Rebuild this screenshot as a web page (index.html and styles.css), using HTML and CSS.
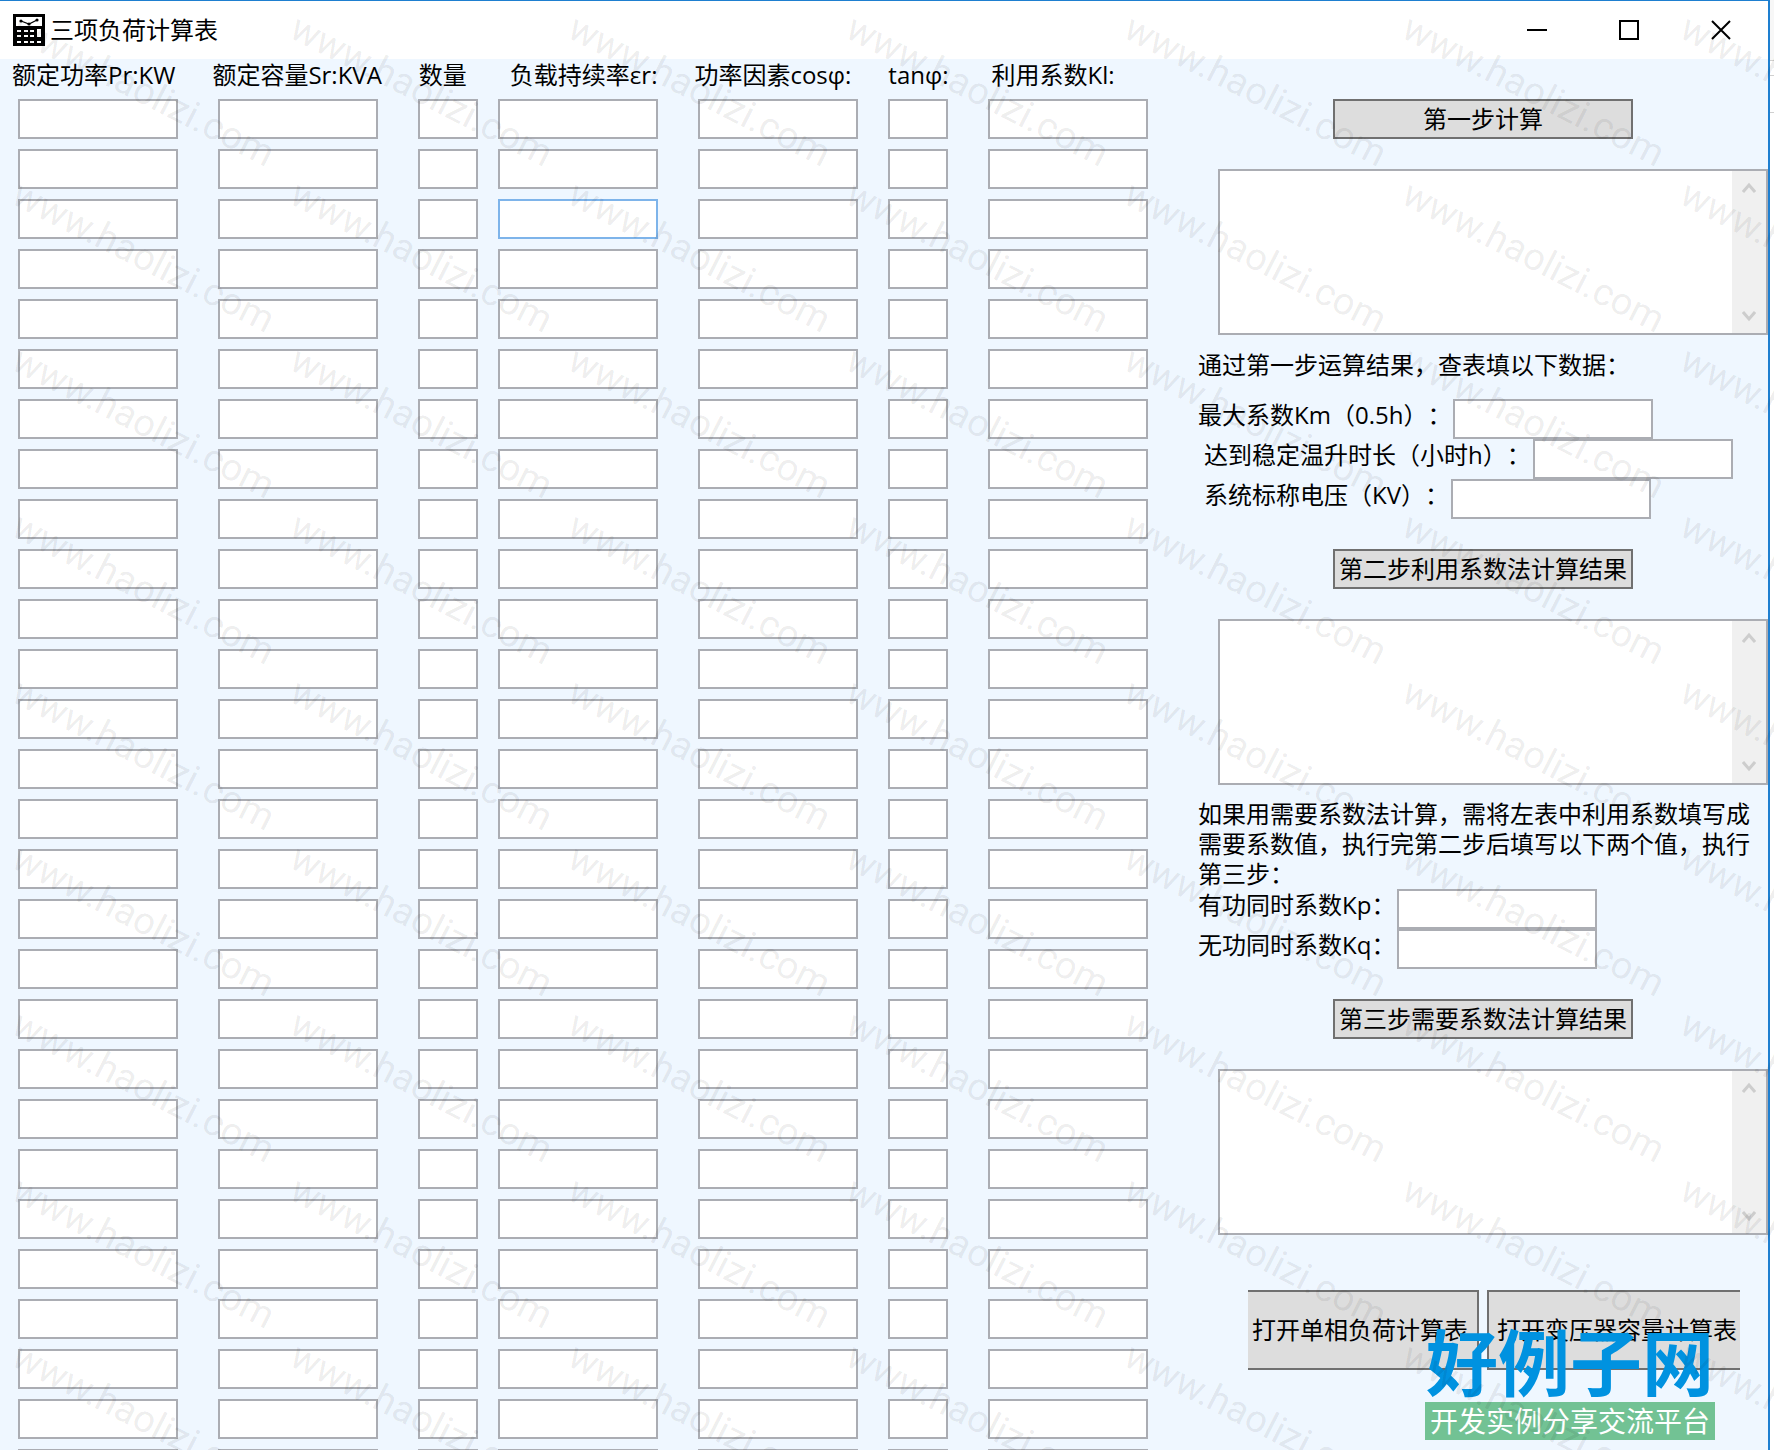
FILE: index.html
```
<!DOCTYPE html>
<html lang="zh-CN">
<head>
  <meta charset="UTF-8" />
  <meta name="viewport" content="width=device-width, initial-scale=1.0"/>
  <title>三项负荷计算表</title>
  <link rel="stylesheet" href="styles.css">
</head>
<body>
  <div class="window">
    <header class="titlebar">
      <svg class="app-icon" width="32" height="32" viewBox="0 0 32 32">
        <rect width="32" height="32" fill="#000"/>
        <rect x="3" y="3" width="26" height="9" fill="#fff"/>
        <path d="M8 7 L16 10 L24 6" fill="none" stroke="#000" stroke-width="1.2"/>
        <circle cx="8" cy="7" r="1.6"/><circle cx="16" cy="10" r="1.6"/><circle cx="24" cy="6" r="1.6"/>
        <path d="M4 16h4v2H4zM11 16h4v2h-4zM17 16h4v2h-4zM24 15h4v8h-4zM4 21h4v2H4zM11 21h4v2h-4zM17 21h4v2h-4zM4 27h4v2H4zM11 27h4v2h-4zM17 27h4v2h-4zM24 27h4v2h-4z" fill="#fff"/>
      </svg>
      <h1>三项负荷计算表</h1>
      <div class="window-buttons">
        <button type="button" aria-label="最小化">
          <svg width="20" height="20" viewBox="0 0 20 20"><path d="M0 10h20" stroke="#000" stroke-width="2"/></svg>
        </button>
        <button type="button" aria-label="最大化">
          <svg width="20" height="20" viewBox="0 0 20 20"><rect x="1" y="1" width="18" height="18" fill="none" stroke="#000" stroke-width="2"/></svg>
        </button>
        <button type="button" aria-label="关闭">
          <svg width="20" height="20" viewBox="0 0 20 20"><path d="M1 1l18 18M19 1L1 19" stroke="#000" stroke-width="2"/></svg>
        </button>
      </div>
    </header>

    <main class="content">
      <table class="loads">
        <thead>
          <tr>
            <th id="pr">额定功率Pr:KW</th>
            <th id="sr">额定容量Sr:KVA</th>
            <th id="num">数量</th>
            <th id="er" class="after-short">负载持续率εr:</th>
            <th id="cos">功率因素cosφ:</th>
            <th id="tan">tanφ:</th>
            <th id="kl" class="after-short">利用系数Kl:</th>
          </tr>
        </thead>
        <tbody id="rows"></tbody>
      </table>

      <div class="steps">
        <button type="button" class="step-btn">第一步计算</button>
        <div class="result">
          <textarea aria-label="第一步结果"></textarea>
          <div class="scrollbar">
            <svg width="14" height="12" viewBox="0 0 14 12"><path d="M1 10l6-7 6 7" /></svg>
            <svg width="14" height="12" viewBox="0 0 14 12"><path d="M1 2l6 7 6-7" /></svg>
          </div>
        </div>

        <p class="hint">通过第一步运算结果，查表填以下数据：</p>
        <div class="fields">
          <div class="field"><label for="km">最大系数Km（0.5h）：</label><input type="text" id="km"></div>
          <div class="field indent"><label for="hours">达到稳定温升时长（小时h）：</label><input type="text" id="hours"></div>
          <div class="field indent"><label for="kv">系统标称电压（KV）：</label><input type="text" id="kv"></div>
        </div>

        <button type="button" class="step-btn">第二步利用系数法计算结果</button>
        <div class="result">
          <textarea aria-label="第二步结果"></textarea>
          <div class="scrollbar">
            <svg width="14" height="12" viewBox="0 0 14 12"><path d="M1 10l6-7 6 7" /></svg>
            <svg width="14" height="12" viewBox="0 0 14 12"><path d="M1 2l6 7 6-7" /></svg>
          </div>
        </div>

        <p class="note">如果用需要系数法计算，需将左表中利用系数填写成需要系数值，执行完第二步后填写以下两个值，执行第三步：</p>
        <div class="fields">
          <div class="field"><label for="kp">有功同时系数Kp：</label><input type="text" id="kp"></div>
          <div class="field"><label for="kq">无功同时系数Kq：</label><input type="text" id="kq"></div>
        </div>

        <button type="button" class="step-btn">第三步需要系数法计算结果</button>
        <div class="result">
          <textarea aria-label="第三步结果"></textarea>
          <div class="scrollbar">
            <svg width="14" height="12" viewBox="0 0 14 12"><path d="M1 10l6-7 6 7" /></svg>
            <svg width="14" height="12" viewBox="0 0 14 12"><path d="M1 2l6 7 6-7" /></svg>
          </div>
        </div>

        <div class="open-buttons">
          <button type="button" class="open-single">打开单相负荷计算表</button>
          <button type="button" class="open-trans">打开变压器容量计算表</button>
        </div>
      </div>
    </main>
  </div>

  <div class="site-logo">
    <div class="site-name">好例子网</div>
    <div class="site-slogan">开发实例分享交流平台</div>
  </div>

  <div class="watermark" id="watermark" aria-hidden="true"></div>

  <script>
    const columns = ['pr', 'sr', 'num', 'er', 'cos', 'tan', 'kl'];
    const short = ['num', 'tan'];
    const rows = document.getElementById('rows');

    for (let i = 0; i < 28; i++) {
      const tr = document.createElement('tr');
      columns.forEach(name => {
        const td = document.createElement('td');
        const input = document.createElement('input');
        input.type = 'text';
        input.name = name + i;
        input.setAttribute('aria-labelledby', name);
        if (short.includes(name)) input.className = 'short';
        if (i === 2 && name === 'er') input.className = 'active';
        td.appendChild(input);
        tr.appendChild(td);
      });
      rows.appendChild(tr);
    }

    // 水印
    const watermark = document.getElementById('watermark');
    for (let i = 0; i < 63; i++) {
      const mark = document.createElement('span');
      mark.textContent = 'www.haolizi.com';
      watermark.appendChild(mark);
    }
  </script>
</body>
</html>
```
FILE: styles.css
```
* {
  box-sizing: border-box;
}

body {
  position: relative;
  height: 100vh;
  margin: 0;
  overflow: hidden;
  background: linear-gradient(#f7f7f7 60px, #d0d0d0 60px, #d0d0d0 61px, #ffffff 61px, #ffffff 75px, #d0d0d0 75px, #d0d0d0 76px, #ffffff 76px, #ffffff 112px, #d0d0d0 112px, #d0d0d0 113px, #ffffff 113px);
  color: #000;
  font-family: "Open Sans", "Noto Sans CJK SC", sans-serif;
  font-size: 24px;
  line-height: 32px;
  text-spacing-trim: space-all;
}

button,
input,
textarea {
  font: inherit;
  color: inherit;
  border-radius: 0;
}

.window {
  height: 100%;
  margin-right: 4px;
  border-top: 1px solid #1e7fd0;
  border-right: 2px solid #1e7fd0;
  background-color: #eff7ff;
  overflow: hidden;
}

.titlebar {
  display: flex;
  align-items: center;
  height: 58px;
  padding: 0 1px 0 13px;
  background-color: #ffffff;
}

.titlebar h1 {
  margin: 0 0 0 5px;
  font-size: 24px;
  font-weight: normal;
}

.window-buttons {
  display: flex;
  margin-left: auto;
}

.window-buttons button {
  display: flex;
  align-items: center;
  justify-content: center;
  width: 92px;
  height: 58px;
  padding: 0;
  border: none;
  background: none;
}

.content {
  display: flex;
}

/* 左侧表格 */
.loads {
  display: block;
  flex: none;
  width: 1148px;
}

.loads thead,
.loads tbody {
  display: block;
}

.loads thead tr {
  display: flex;
  gap: 37px;
  height: 40px;
  padding-left: 12px;
}

.loads th {
  padding: 0;
  font-weight: normal;
  white-space: nowrap;
}

.loads .after-short {
  margin-left: 6px;
}

.loads tbody tr {
  display: grid;
  grid-template-columns: 200px 200px 80px 200px 190px 100px 160px;
  height: 50px;
  padding-left: 18px;
}

.loads td {
  display: flex;
  padding: 0;
}

input {
  width: 160px;
  height: 40px;
  padding: 0 4px;
  border: 2px solid #abadb3;
  background-color: #ffffff;
}

input.short {
  width: 60px;
}

input.active {
  border-color: #7eb4ea;
}

/* 右侧步骤 */
.steps {
  flex: 1;
  min-width: 0;
  margin-left: 50px;
  padding-top: 40px;
}

.step-btn {
  display: block;
  width: 300px;
  height: 40px;
  margin: 0 auto 30px;
  padding: 0;
  border: 2px solid #707070;
  background-color: #dddddd;
}

.result {
  display: flex;
  height: 166px;
  margin-left: 20px;
  border: 2px solid #abadb3;
  background-color: #ffffff;
}

.result textarea {
  flex: 1;
  padding: 4px;
  border: none;
  background: none;
  resize: none;
}

.scrollbar {
  display: flex;
  flex-direction: column;
  justify-content: space-between;
  align-items: center;
  width: 34px;
  padding: 11px 0;
  background-color: #f0f0f0;
}

.scrollbar path {
  fill: none;
  stroke: #cdcdcd;
  stroke-width: 3;
}

.hint {
  margin: 14px 0 18px;
}

.note {
  margin: 14px 0 0;
  padding-right: 16px;
  line-height: 30px;
}

.fields {
  margin-bottom: 30px;
}

.field {
  display: flex;
  gap: 2px;
}

.field.indent {
  padding-left: 6px;
}

.field input {
  width: 200px;
}

.open-buttons {
  display: flex;
  gap: 8px;
  margin: 55px 0 0 50px;
}

.open-buttons button {
  height: 80px;
  border: 2px solid #707070;
  background-color: #dddddd;
  white-space: nowrap;
}

.open-single {
  padding: 0 9px 0 4px;
}

.open-trans {
  padding: 0 3px 0 8px;
}

.open-buttons .open-single {
  border-left: none;
}

.open-buttons .open-trans {
  border-right: none;
}

/* 右下角网站标志 */
.site-logo {
  position: absolute;
  right: 59px;
  bottom: 10px;
  width: 290px;
  text-align: center;
}

.site-name {
  color: #0092e0;
  font-size: 72px;
  font-weight: bold;
  line-height: 80px;
}

.site-slogan {
  background-color: #72c294;
  color: #ffffff;
  font-size: 28px;
  line-height: 38px;
}

.watermark {
  position: absolute;
  inset: 0;
  display: grid;
  grid-template-columns: repeat(7, 278px);
  grid-auto-rows: 166px;
  overflow: hidden;
  pointer-events: none;
}

.watermark span {
  padding: 6px 0 0 16px;
  color: rgba(0, 0, 0, 0.08);
  font-family: Roboto, sans-serif;
  font-size: 38px;
  line-height: 40px;
  transform: rotate(27deg);
  transform-origin: 18px 24px;
}
```
